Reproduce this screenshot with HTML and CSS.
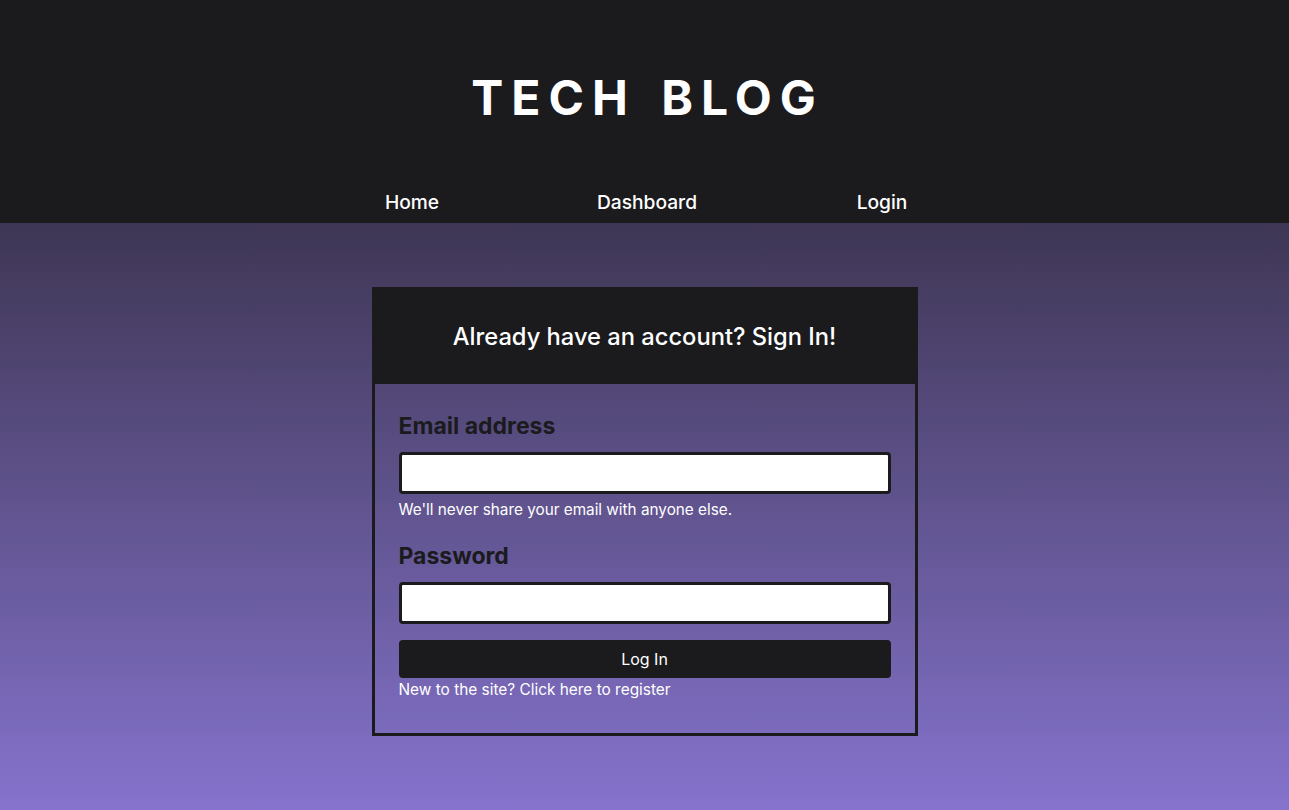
FILE: index.html
```html
<!DOCTYPE html>
<html lang="en">
<head>
<meta charset="utf-8">
<title>Tech Blog</title>
<link rel="stylesheet" href="styles.css">
</head>
<body>
<header class="site-header">
  <h1 class="site-title">TECH BLOG</h1>
  <nav class="site-nav">
    <a class="nav-link" href="#">Home</a>
    <a class="nav-link" href="#">Dashboard</a>
    <a class="nav-link" href="#">Login</a>
  </nav>
</header>
<main class="main">
  <section class="card">
    <div class="card-header">
      <h2 class="card-title">Already have an account? Sign In!</h2>
    </div>
    <form class="card-body">
      <label class="form-label" for="email">Email address</label>
      <input class="form-input" id="email" type="email">
      <div class="form-help">We'll never share your email with anyone else.</div>
      <label class="form-label form-label-second" for="password">Password</label>
      <input class="form-input" id="password" type="password">
      <button class="btn" type="button">Log In</button>
      <a class="register-link" href="#">New to the site? Click here to register</a>
    </form>
  </section>
</main>
</body>
</html>
```
FILE: styles.css
```css
* { box-sizing: border-box; }
html, body { margin: 0; padding: 0; }
body {
  font-family: Inter, "Noto Sans", sans-serif;
  background: #1b1b1d;
  min-height: 810px;
  display: flex;
  flex-direction: column;
}
.site-header {
  background: #1b1b1d;
  padding: 68px 0 9px;
  display: flex;
  flex-direction: column;
  align-items: center;
}
.site-title {
  margin: 0;
  color: #fff;
  font-size: 48px;
  line-height: 60px;
  font-weight: 700;
  letter-spacing: 8px;
  word-spacing: 6px;
  padding-left: 6px;
}
.site-nav {
  margin-top: 62px;
  padding-left: 5px;
  display: flex;
  justify-content: center;
}
.nav-link {
  width: 235px;
  text-align: center;
  color: #fff;
  text-decoration: none;
  font-size: 19.2px;
  line-height: 24px;
  font-weight: 500;
}
.main {
  flex: 1;
  background: linear-gradient(to bottom, #3e3654 0%, #8573cd 100%);
  padding-top: 64px;
  display: flex;
  justify-content: center;
  align-items: flex-start;
}
.card {
  width: 546px;
  border: 3px solid #1b1b1d;
}
.card-header {
  background: #1b1b1d;
  height: 94px;
  display: flex;
  align-items: center;
  justify-content: center;
}
.card-title {
  margin: 0;
  color: #fff;
  font-size: 23.7px;
  line-height: 30px;
  font-weight: 500;
}
.card-body {
  padding: 28px 24px 33px;
  display: flex;
  flex-direction: column;
  align-items: stretch;
}
.form-label {
  color: #1b1b1d;
  font-size: 23px;
  line-height: 28px;
  font-weight: 700;
}
.form-label-second { margin-top: 22px; }
.form-input {
  margin-top: 12px;
  height: 42px;
  border: 3px solid #1b1b1d;
  border-radius: 4px;
  background: #fff;
  font: inherit;
  padding: 0 10px;
}
.form-help {
  margin-top: 6px;
  color: #fff;
  font-size: 15.3px;
  line-height: 20px;
}
.btn {
  margin-top: 16px;
  height: 38px;
  border: none;
  border-radius: 4px;
  background: #1b1b1d;
  color: #fff;
  font-family: inherit;
  font-size: 16px;
}
.register-link {
  margin-top: 2px;
  color: #fff;
  text-decoration: none;
  font-size: 15.4px;
  line-height: 20px;
}
```
